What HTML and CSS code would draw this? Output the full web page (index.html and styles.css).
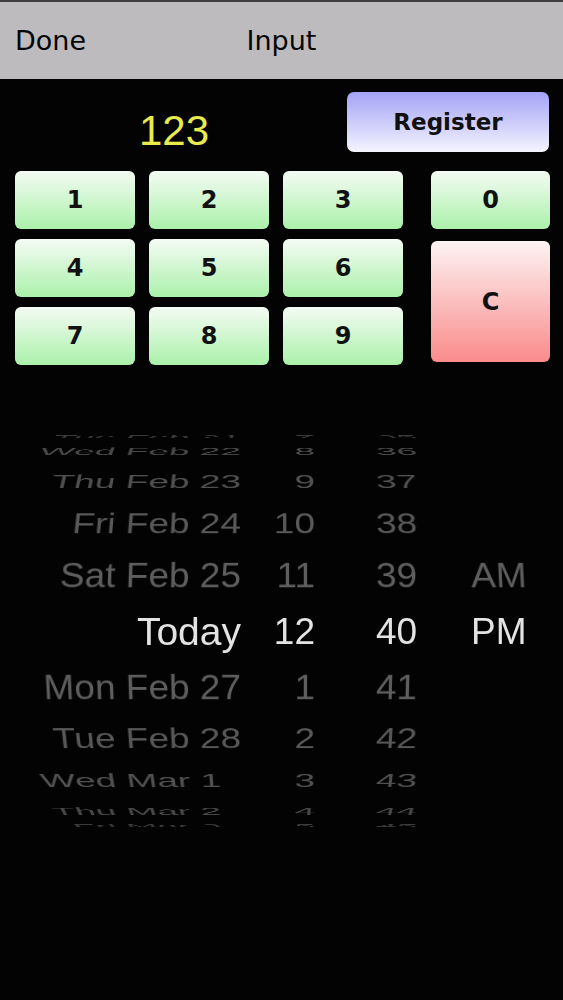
FILE: index.html
```html
<!DOCTYPE html>
<html lang="en">
<head>
  <meta charset="UTF-8">
  <meta name="viewport" content="width=device-width, initial-scale=1.0">
  <title>Input</title>
  <link rel="stylesheet" href="styles.css">
</head>
<body>

  <header class="nav">
    <span class="nav-left">Done</span>
    <span class="nav-title">Input</span>
    <span></span>
  </header>

  <div class="entry">
    <div class="display">123</div>
    <button class="register">Register</button>
  </div>

  <div class="keypad">
    <div class="digits">
      <button class="key">1</button>
      <button class="key">2</button>
      <button class="key">3</button>
      <button class="key">4</button>
      <button class="key">5</button>
      <button class="key">6</button>
      <button class="key">7</button>
      <button class="key">8</button>
      <button class="key">9</button>
    </div>
    <div class="side">
      <button class="key">0</button>
      <button class="key clear">C</button>
    </div>
  </div>

  <div class="picker">
    <div class="row d5 up5"><span class="date">Tue Feb 21</span><span class="hour">7</span><span class="min">35</span><span class="ampm"></span></div>
    <div class="row d4 up4"><span class="date">Wed Feb 22</span><span class="hour">8</span><span class="min">36</span><span class="ampm"></span></div>
    <div class="row d3 up3"><span class="date">Thu Feb 23</span><span class="hour">9</span><span class="min">37</span><span class="ampm"></span></div>
    <div class="row d2 up2"><span class="date">Fri Feb 24</span><span class="hour">10</span><span class="min">38</span><span class="ampm"></span></div>
    <div class="row d1 up1"><span class="date">Sat Feb 25</span><span class="hour">11</span><span class="min">39</span><span class="ampm">AM</span></div>
    <div class="row d0"><span class="date">Today</span><span class="hour">12</span><span class="min">40</span><span class="ampm">PM</span></div>
    <div class="row d1 dn1"><span class="date">Mon Feb 27</span><span class="hour">1</span><span class="min">41</span><span class="ampm"></span></div>
    <div class="row d2 dn2"><span class="date">Tue Feb 28</span><span class="hour">2</span><span class="min">42</span><span class="ampm"></span></div>
    <div class="row d3 dn3"><span class="date short">Wed Mar 1</span><span class="hour">3</span><span class="min">43</span><span class="ampm"></span></div>
    <div class="row d4 dn4"><span class="date short">Thu Mar 2</span><span class="hour">4</span><span class="min">44</span><span class="ampm"></span></div>
    <div class="row d5 dn5"><span class="date short">Fri Mar 3</span><span class="hour">5</span><span class="min">45</span><span class="ampm"></span></div>
  </div>

</body>
</html>
```

FILE: styles.css
```css
body {
  margin: 0;
  background: #030303;
  font-family: "Liberation Sans", Arial, sans-serif;
}

.nav {
  display: grid;
  grid-template-columns: 1fr auto 1fr;
  align-items: center;
  height: 77px;
  padding: 0 15px;
  border-top: 2px solid #3e3e3e;
  background: #bdbbbe;
  font-family: "DejaVu Sans", sans-serif;
  font-size: 27px;
  color: #050505;
}
.nav-title {
  text-align: center;
}

.entry {
  display: flex;
  padding: 13px 14px 0 15px;
}
.display {
  flex: 1;
  margin: 18px 14px 0 0;
  font-size: 42px;
  line-height: 42px;
  text-align: center;
  color: #e9ea4e;
}
.register {
  width: 202px;
  height: 60px;
  border: none;
  border-radius: 7px;
  background: linear-gradient(#a4a3f6, #f4f4ff);
  font-family: "DejaVu Sans", sans-serif;
  font-weight: bold;
  font-size: 23px;
  color: #111;
}

.keypad {
  display: flex;
  margin-top: 19px;
  padding-left: 15px;
}
.digits {
  display: grid;
  grid-template-columns: repeat(3, 120px);
  grid-auto-rows: 58px;
  gap: 10px 14px;
}
.side {
  display: flex;
  flex-direction: column;
  width: 119px;
  margin-left: 28px;
}
.key {
  height: 58px;
  border: none;
  border-radius: 6px;
  background: linear-gradient(#f4fbf4, #abf1aa);
  font-family: "DejaVu Sans", sans-serif;
  font-weight: bold;
  font-size: 24px;
  color: #111;
}
.key.clear {
  flex: 1;
  margin: 12px 0 3px;
  background: linear-gradient(#fdf3f3, #fa8b8b);
}

.picker {
  margin-top: 70px;
  perspective: 1500px;
  perspective-origin: 50% 50%;
  font-size: 37px;
  overflow: hidden;
}
.row {
  display: grid;
  grid-template-columns: 241px 74px 156px 1fr;
  white-space: nowrap;
  color: #5c5c5c;
}
.date, .hour {
  text-align: right;
}
.date.short {
  padding-right: 20px;
}
.min {
  padding-left: 61px;
}

.d0 { height: 57px; line-height: 57px; color: #e3e3e3; }
.d1 { height: 55px; line-height: 55px; color: #5e5e5e; }
.d2 { height: 48px; line-height: 48px; color: #585858; }
.d3 { height: 36px; line-height: 36px; color: #505050; }
.d4 { height: 25px; line-height: 25px; color: #484848; }
.d5 { height: 4px; line-height: 4px; color: #3a3a3a; }

.d0 .date { font-size: 39px; }

.up1 { transform: rotateX(18deg); }
.up2 { transform: rotateX(36deg); }
.up3 { transform: rotateX(54deg); }
.up4 { transform: rotateX(67deg); }
.up5 { transform: rotateX(76deg); }
.dn1 { transform: rotateX(-18deg); }
.dn2 { transform: rotateX(-36deg); }
.dn3 { transform: rotateX(-54deg); }
.dn4 { transform: rotateX(-67deg); }
.dn5 { transform: rotateX(-76deg); }
```
